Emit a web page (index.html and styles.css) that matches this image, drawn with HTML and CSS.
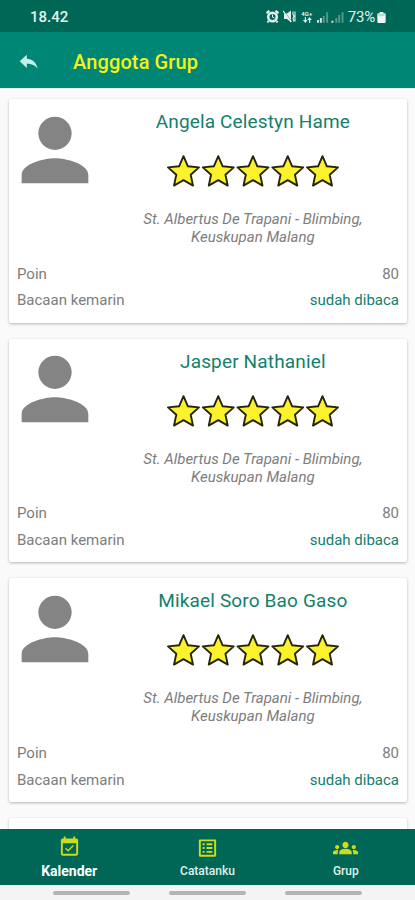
FILE: index.html
```html
<!DOCTYPE html>
<html lang="id">
<head>
<meta charset="utf-8">
<title>Anggota Grup</title>
<link rel="stylesheet" href="styles.css">
</head>
<body>
<svg class="defs" aria-hidden="true">
  <symbol id="person" viewBox="0 0 24 24"><path d="M12 12c2.21 0 4-1.79 4-4s-1.79-4-4-4-4 1.79-4 4 1.79 4 4 4zm0 2c-2.67 0-8 1.34-8 4v2h16v-2c0-2.66-5.33-4-8-4z"/></symbol>
  <symbol id="stars" viewBox="0 0 174 34">
    <g id="star"><path d="M17.5 2.2 21.9 12.3 33 13.4 24.7 20.8 27 31.6 17.5 26.1 8 31.6 10.3 20.8 2 13.4 13.1 12.3Z"/></g>
    <use href="#star" x="34.75"/><use href="#star" x="69.5"/><use href="#star" x="104.25"/><use href="#star" x="139"/>
  </symbol>
</svg>
<div class="screen">
  <header class="status">
    <span class="time">18.42</span>
    <span class="indicators">
      <svg class="alarm" viewBox="0 0 13 13"><path d="M.6 3.3 3.4.7M12.4 3.3 9.6.7" stroke="#e4f2ee" stroke-width="2.2"/><path d="M2.5 11.2 1.4 12.5M10.5 11.2l1.1 1.3" stroke="#e4f2ee" stroke-width="2"/><circle cx="6.5" cy="7" r="4.3" fill="none" stroke="#e4f2ee" stroke-width="2.5"/><path d="M6.5 4.5V7.2L8.5 8" fill="none" stroke="#e4f2ee" stroke-width="1"/></svg>
      <svg class="mute" viewBox="0 0 13 13"><path d="M1 3.5h3L8 .5v12L4 9H1z" fill="#e4f2ee"/><path d="M.5.8 7.5 10" stroke="#006756" stroke-width=".8"/><path d="M0 .8 8.500 12" stroke="#e4f2ee" stroke-width="1.2"/><path d="M10.200 1.500 9.800 4l1.200 2-1 2.500 1 3M12 1.500v10" fill="none" stroke="#e4f2ee" stroke-width="1.100"/></svg>
      <span class="network"><span>4G+</span><svg viewBox="0 0 10 6"><path d="M2.8 0v3H.8l2.700 3 2-3H4V0zM7 6V3H5.200L7.500 0 10 3H8.200v3z" fill="#dcefea"/></svg></span>
      <svg class="signal" viewBox="0 0 28 12"><path d="M0 9h2v3H0zM3 7h2v5H3zM15 10h2v2h-2z" fill="#d5e9e4"/><path d="M6 5h2v7H6zM9.500 1h2v11h-2zM19 7h2v5h-2zM22 4h2v8h-2zM25.500 1h2v11h-2z" fill="#58988c"/></svg>
      <span class="percent">73%</span>
      <svg class="battery" viewBox="0 0 9 13"><path d="M2.500 1h4v1.500H8q1 0 1 1V12q0 1-1 1H1q-1 0-1-1V3.500q0-1 1-1h1.500z" fill="#edf7f4"/><path d="M1 3.500h7V5H1z" fill="#a7cbc3"/></svg>
    </span>
  </header>
  <div class="appbar">
    <svg class="back" viewBox="0 0 19 16"><path d="M7.800.8v4C14 5.300 17.400 9 18.700 14.800 16 11.200 12.800 9.800 7.800 9.800v4.100L.7 7.200z" fill="#c9f0e8"/></svg>
    <h1>Anggota Grup</h1>
  </div>
  <main>
    <article class="card">
      <div class="profile">
        <svg class="avatar"><use href="#person"/></svg>
        <div class="info"><h2>Angela Celestyn Hame</h2><svg class="rating"><use href="#stars"/></svg><p>St. Albertus De Trapani - Blimbing,<br>Keuskupan Malang</p></div>
      </div>
      <div class="row"><span>Poin</span><span>80</span></div>
      <div class="row"><span>Bacaan kemarin</span><span class="read">sudah dibaca</span></div>
    </article>
    <article class="card">
      <div class="profile">
        <svg class="avatar"><use href="#person"/></svg>
        <div class="info"><h2>Jasper Nathaniel</h2><svg class="rating"><use href="#stars"/></svg><p>St. Albertus De Trapani - Blimbing,<br>Keuskupan Malang</p></div>
      </div>
      <div class="row"><span>Poin</span><span>80</span></div>
      <div class="row"><span>Bacaan kemarin</span><span class="read">sudah dibaca</span></div>
    </article>
    <article class="card">
      <div class="profile">
        <svg class="avatar"><use href="#person"/></svg>
        <div class="info"><h2>Mikael Soro Bao Gaso</h2><svg class="rating"><use href="#stars"/></svg><p>St. Albertus De Trapani - Blimbing,<br>Keuskupan Malang</p></div>
      </div>
      <div class="row"><span>Poin</span><span>80</span></div>
      <div class="row"><span>Bacaan kemarin</span><span class="read">sudah dibaca</span></div>
    </article>
    <article class="card"></article>
  </main>
  <nav>
    <a class="active"><svg viewBox="0 0 24 24"><path d="M16.53 11.06 15.47 10l-4.88 4.88-2.12-2.12-1.06 1.06L10.59 17l5.94-5.94zM19 3h-1V1h-2v2H8V1H6v2H5c-1.110 0-1.990.9-1.990 2L3 19c0 1.100.89 2 2 2h14c1.100 0 2-.9 2-2V5c0-1.100-.9-2-2-2zm0 16H5V8h14v11z"/></svg><span>Kalender</span></a>
    <a><svg class="notes" viewBox="0 0 24 24"><path d="M19 5v14H5V5h14m1.100-2H3.900c-.5 0-.9.4-.9.9v16.200c0 .4.4.9.9.9h16.200c.4 0 .9-.5.9-.9V3.900c0-.5-.5-.9-.9-.9zM11 7h6v2h-6V7zm0 4h6v2h-6v-2zm0 4h6v2h-6zM7 7h2v2H7zm0 4h2v2H7zm0 4h2v2H7z"/></svg><span>Catatanku</span></a>
    <a><svg class="group" viewBox="0 0 24 24"><path d="M12 12.750c1.630 0 3.070.39 4.240.9 1.080.48 1.760 1.560 1.760 2.730V18H6v-1.610c0-1.180.68-2.260 1.760-2.730 1.170-.52 2.610-.91 4.240-.91zM4 13c1.100 0 2-.9 2-2s-.9-2-2-2-2 .9-2 2 .9 2 2 2zm1.130 1.100c-.37-.06-.74-.1-1.130-.1-.99 0-1.930.21-2.780.58C.48 14.900 0 15.620 0 16.430V18h4.500v-1.610c0-.83.23-1.610.63-2.290zM20 13c1.100 0 2-.9 2-2s-.9-2-2-2-2 .9-2 2 .9 2 2 2zm4 3.430c0-.81-.48-1.530-1.220-1.850-.85-.37-1.790-.58-2.780-.58-.39 0-.76.04-1.130.1.400.68.63 1.460.63 2.290V18H24v-1.570zM12 6c1.660 0 3 1.340 3 3s-1.340 3-3 3-3-1.340-3-3 1.340-3 3-3z"/></svg><span>Grup</span></a>
  </nav>
  <footer><i></i><i></i><i></i></footer>
</div>
</body>
</html>
```
FILE: styles.css
```css
* { box-sizing: border-box; }
body { margin: 0; font-family: Roboto, sans-serif; color: #7d7d7d; }
h1, h2, p { margin: 0; }
svg { display: block; flex: none; }
.defs { position: absolute; width: 0; height: 0; }
.screen { width: 415px; height: 900px; display: flex; flex-direction: column; overflow: hidden; background: #fafafa; }
.status { flex: none; height: 32px; padding: 1px 29px 0 30px; display: flex; align-items: center; justify-content: space-between; background: #006756; color: #e4f2ee; }
.time { font-size: 15px; font-weight: 500; }
.indicators { display: flex; align-items: center; }
.alarm { width: 13px; height: 13px; margin-right: 4px; }
.mute { width: 13px; height: 13px; margin-right: 5px; }
.network { width: 12px; margin-right: 4px; display: flex; flex-direction: column; align-items: center; font-size: 6px; line-height: 7px; font-weight: 700; }
.network svg { width: 10px; height: 6px; }
.signal { width: 27px; height: 12px; margin-right: 4px; }
.percent { font-size: 15px; letter-spacing: -.2px; margin-right: 2px; }
.battery { width: 9px; height: 12px; }
.appbar { flex: none; height: 57px; padding: 3px 19px 0; display: flex; align-items: center; background: #008675; border-bottom: 1px solid #55aca0; }
.back { width: 19px; height: 16px; margin-right: 35px; }
h1 { font-size: 20px; font-weight: 500; line-height: 24px; letter-spacing: .12px; color: #f3f31a; }
main { flex: 1; min-height: 0; overflow: hidden; padding: 10px 8px 0 9px; display: flex; flex-direction: column; gap: 16px; border-top: 1px solid #dcf0ed; }
.card { flex: none; height: 223.7px; background: #fff; border-radius: 2px; box-shadow: 0 1px 3px rgba(0,0,0,.28); }
main { margin-top: -1px; }
.profile { height: 161.5px; display: flex; }
.avatar { width: 100px; height: 100px; margin: .5px 0 0 -4.3px; fill: #848484; }
.info { flex: 1; padding: 11px 10px 0 4px; display: flex; flex-direction: column; align-items: center; text-align: center; }
h2 { font-size: 19px; line-height: 23px; font-weight: 400; letter-spacing: .15px; color: #13806d; white-space: nowrap; }
.rating { width: 174px; height: 34px; margin-top: 21px; fill: #fbf22b; stroke: #25250c; stroke-width: 1.9; stroke-linejoin: round; }
p { margin-top: 22px; font-size: 15px; line-height: 18px; font-style: italic; white-space: nowrap; }
.row { height: 26.5px; padding: 0 8px; display: flex; justify-content: space-between; align-items: center; font-size: 15px; line-height: 18px; }
.read { color: #13806d; }
nav { flex: none; height: 56px; display: flex; background: #006756; color: #e2f1ee; }
nav a { flex: 1; padding-top: 6px; display: flex; flex-direction: column; align-items: center; font-size: 12px; line-height: 16px; font-weight: 500; }
nav svg { width: 23px; height: 24px; margin-bottom: 4px; fill: #cddc18; }
nav .notes { height: 26px; margin-bottom: 2px; }
nav .group { width: 25px; height: 26px; margin-bottom: 2px; }
nav .active { font-size: 14px; font-weight: 700; color: #fff; }
footer { flex: none; height: 15px; padding: 6px 53px 0; display: flex; justify-content: space-between; background: #f4f4f4; }
footer i { width: 77px; height: 4px; border-radius: 2px; background: #b4b4b4; }
```
